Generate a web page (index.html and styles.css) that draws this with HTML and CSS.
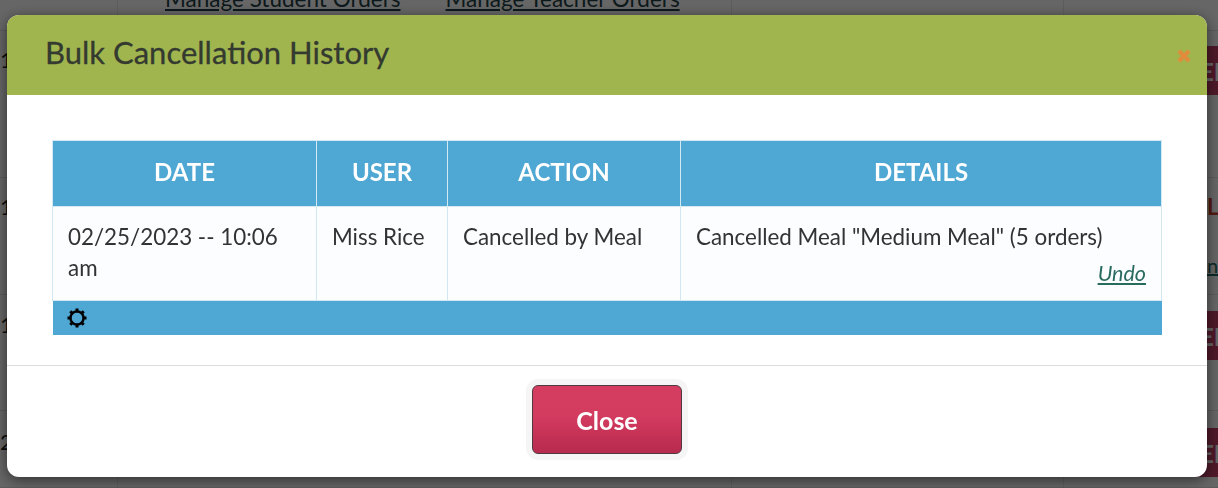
FILE: index.html
```html
<!DOCTYPE html>
<html lang="en">
<head>
<meta charset="utf-8">
<title>Bulk Cancellation History</title>
<link rel="stylesheet" href="styles.css">
</head>
<body>
<div class="page">
  <div class="page-links"><a href="#">Manage Student Orders</a><a href="#">Manage Teacher Orders</a></div>
  <div class="page-row first"><span class="num">14</span><span class="red-btn">EDIT</span></div>
  <div class="page-row second"><span class="num">1</span><div class="side"><span class="red-text">LE</span><a class="side-link" href="#">nn</a></div></div>
  <div class="page-row third"><span class="num">14</span><span class="red-btn">EDIT</span></div>
  <div class="page-row fourth"><span class="num">2</span><span class="red-btn">EDIT</span></div>
</div>
<div class="overlay">
  <div class="modal">
    <header class="modal-head">
      <h1>Bulk Cancellation History</h1>
      <svg class="close-x" viewBox="0 0 14 14" aria-label="Close"><path d="M2.5 2.5l9 9M11.5 2.5l-9 9"/></svg>
    </header>
    <div class="modal-body">
      <table class="history">
        <thead>
          <tr><th class="c-date">DATE</th><th class="c-user">USER</th><th class="c-action">ACTION</th><th>DETAILS</th></tr>
        </thead>
        <tbody>
          <tr>
            <td>02/25/2023 -- 10:06 am</td>
            <td>Miss Rice</td>
            <td>Cancelled by Meal</td>
            <td>Cancelled Meal "Medium Meal" (5 orders)<div class="undo"><a href="#">Undo</a></div></td>
          </tr>
        </tbody>
        <tfoot>
          <tr><td colspan="4">
            <svg class="gear" viewBox="0 0 20 20" aria-label="Settings">
              <circle cx="10" cy="10" r="6.6"/>
              <path d="M10 .5v3.9M10 15.6v3.9M.5 10h3.9M15.6 10h3.9M3.3 3.3l2.7 2.7M14 14l2.7 2.7M16.7 3.3L14 6M6 14l-2.7 2.7"/>
            </svg>
          </td></tr>
        </tfoot>
      </table>
    </div>
    <footer class="modal-foot">
      <button class="close-btn" type="button">Close</button>
    </footer>
  </div>
</div>
</body>
</html>
```
FILE: styles.css
```css
* { box-sizing: border-box; }
html, body { margin: 0; height: 100%; overflow: hidden; background: #fff; }
body { font-family: "Lato", "Liberation Sans", sans-serif; color: #333; }

.page { height: 488px; overflow: hidden; background-image: linear-gradient(#e9e9e9, #e9e9e9), linear-gradient(#e9e9e9, #e9e9e9), linear-gradient(#e9e9e9, #e9e9e9); background-size: 1px 100%; background-repeat: no-repeat; background-position: 117px 0, 731px 0, 1063px 0; }
.page-links { height: 46px; margin-top: -15px; padding-left: 165px; display: flex; gap: 45px; font-size: 22.5px; line-height: 27px; border-bottom: 1px solid #e4e4e4; }
.page-links a { color: #1f3f45; text-decoration: underline; }
.page-row { display: flex; justify-content: space-between; border-bottom: 1px solid #e4e4e4; font-size: 22px; color: #222; }
.page-row.first { height: 147px; padding-top: 15px; }
.page-row.second { height: 117px; padding-top: 15px; }
.page-row.third { height: 116px; padding-top: 16px; }
.page-row.fourth { height: 77px; padding-top: 17px; }
.red-btn { flex: none; width: 60px; height: 49px; padding: 11px 0 0 42px; background: #c63f69; color: #fff; font-size: 24px; font-weight: 700; white-space: nowrap; }
.side { flex: none; width: 11px; display: flex; flex-direction: column; white-space: nowrap; }
.red-text { color: #d23b2a; font-weight: 700; }
.side-link { margin-top: 33px; color: #1f6b62; font-size: 20px; text-decoration: underline; }

.overlay { position: fixed; inset: 0; background: rgba(0, 0, 0, .6); padding: 15px 11px 11px 7px; }
.modal { height: 462px; background: #fff; border-radius: 12px; box-shadow: 0 3px 14px rgba(0, 0, 0, .55); overflow: hidden; display: flex; flex-direction: column; }

.modal-head { height: 80px; flex: none; background: #a1b54f; display: flex; align-items: center; justify-content: space-between; padding: 0 15px 0 38px; }
.modal-head h1 { margin: 0 0 5px; font-size: 31px; font-weight: 400; color: #343a2f; line-height: 1; -webkit-text-stroke: .3px #343a2f; }
.close-x { width: 16px; height: 16px; margin-top: 2px; }
.close-x path { fill: none; stroke: #e08c3c; stroke-width: 3.6; }

.modal-body { flex: none; height: 270px; padding: 45px 45px 0; }
.history { width: 1110px; border-collapse: collapse; table-layout: fixed; font-size: 22.4px; line-height: 31px; }
.history th { height: 66px; padding: 0 0 4px; background: #4fa7d3; color: #fff; font-size: 24px; font-weight: 700; border: 1px solid #d5e9f3; }
.c-date { width: 264px; }
.c-user { width: 131px; }
.c-action { width: 233px; }
.history tbody td { height: 94px; background: #fbfdff; border: 1px solid #d2e7f1; padding: 14px 15px 0; vertical-align: top; color: #333; }
.undo { text-align: right; font-size: 21.5px; font-style: italic; line-height: 24px; margin-top: 9px; }
.undo a { color: #2a6b60; }
.history tfoot td { height: 34px; background: #4fa7d3; padding: 0 0 0 14px; vertical-align: middle; line-height: 0; }
.gear { width: 20px; height: 20px; }
.gear circle { fill: none; stroke: #000; stroke-width: 2.4; }
.gear path { fill: none; stroke: #000; stroke-width: 3; }

.modal-foot { flex: 1; border-top: 1px solid #ddd; display: flex; justify-content: center; padding-top: 19px; }
.close-btn { width: 150px; height: 69px; padding: 0; border: 1px solid #4f3a40; border-radius: 6px; background: linear-gradient(#d43c60 0%, #d33b5f 45%, #b72a4e 100%); color: #fff; font: 700 25px "Lato", "Liberation Sans", sans-serif; box-shadow: 0 0 0 6px #f5f5f5; }
```
